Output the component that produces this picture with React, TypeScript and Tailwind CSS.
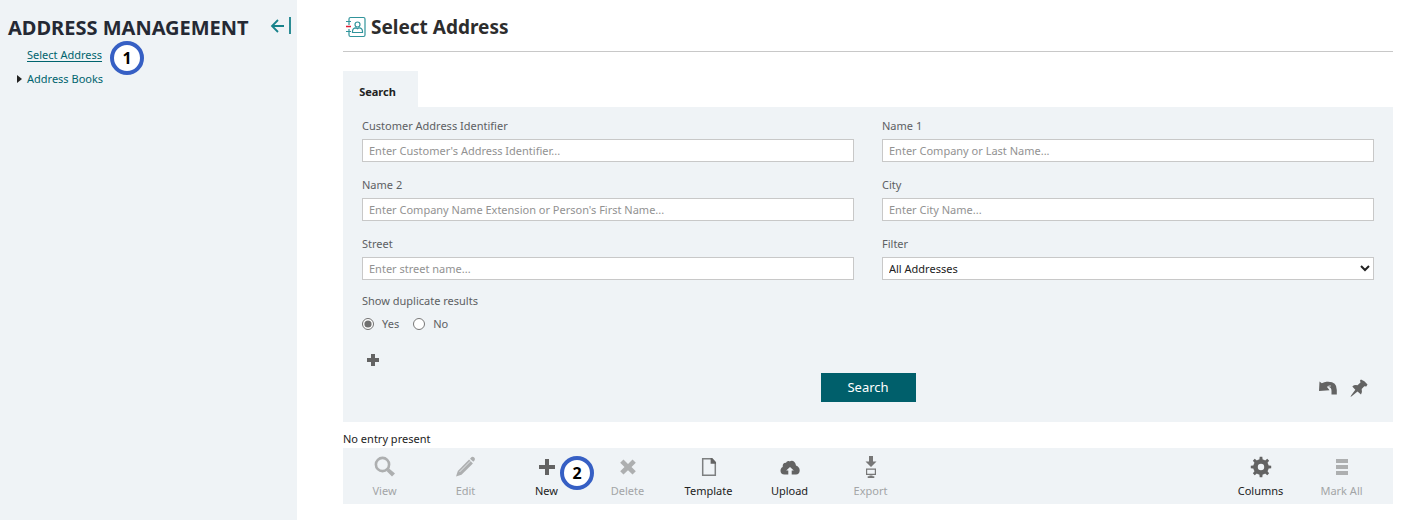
import React, { useState } from 'react';

const textFields = [
  { id: 'identifier', label: 'Customer Address Identifier', placeholder: "Enter Customer's Address Identifier..." },
  { id: 'name1', label: 'Name 1', placeholder: 'Enter Company or Last Name...' },
  { id: 'name2', label: 'Name 2', placeholder: "Enter Company Name Extension or Person's First Name..." },
  { id: 'city', label: 'City', placeholder: 'Enter City Name...' },
  { id: 'street', label: 'Street', placeholder: 'Enter street name...' },
];

function Icon({ children, size = 22 }: { children: React.ReactNode; size?: number }) {
  return (
    <svg width={size} height={size} viewBox="0 0 22 22" fill="currentColor" aria-hidden="true">
      {children}
    </svg>
  );
}

const ViewIcon = () => (
  <Icon>
    <circle cx="8.500" cy="8.500" r="6.600" fill="none" stroke="currentColor" strokeWidth="2.600" />
    <path d="M12.500 15l2.600-2.600 5.900 5-3 3.200z" />
  </Icon>
);

const EditIcon = () => (
  <Icon>
    <path d="M1 20.500l1.800-5.600L14.100 3.600l3.800 3.800L6.500 18.700z" />
    <path d="M15 2.700l1.600-1.600q1.300-.8 2.600.5t.5 2.600l-1.400 1.600z" />
    <path d="M4.500 16L15.300 5.200" stroke="#eff3f6" strokeWidth=".8" />
  </Icon>
);

const PlusIcon = () => (
  <Icon>
    <path d="M9 3h4v6h6v4h-6v6H9v-6H3V9h6z" />
  </Icon>
);

const DeleteIcon = () => (
  <Icon>
    <path d="M6.500 3.500L11 7.900l4.500-4.400 3.300 3.300-4.300 4.300 4.300 4.200-3.300 3.300-4.500-4.300-4.500 4.300-3.300-3.300 4.300-4.200-4.300-4.300z" />
  </Icon>
);

const TemplateIcon = () => (
  <Icon>
    <path d="M4.700 2.700h9l3.600 3.800v12.800H4.700z" fill="none" stroke="#7d7f80" strokeWidth="1.500" />
    <path d="M12.600 2h1.500L18 6.300v1.500h-5.400z" />
  </Icon>
);

const UploadIcon = () => (
  <Icon>
    <path d="M5.500 18.500C2.800 18.500 1.500 17 1.500 14.800c0-1.900.8-3.200 2.200-3.800C3.500 8 5 6.600 7 6.900 7.700 5.300 9.300 4.500 10.700 5.500 12.300 3.800 16.500 4.500 17 9.500c2.300.8 3.800 2.600 3.700 5.100-.1 2.500-1.500 3.900-3.700 3.900h-4.300v-4h2.100L11 10.900l-3.800 3.600h2.100v4z" />
  </Icon>
);

const ExportIcon = () => (
  <Icon>
    <path d="M9 0h4v5.400h3.500L11 11 5.500 5.400H9z" />
    <path d="M6.600 13.100h8.800v5.300H6.600z" fill="none" stroke="currentColor" strokeWidth="1.200" />
    <path d="M9.500 19.500h3v.8h1.800V22H7.700v-1.700h1.800z" />
  </Icon>
);

const ColumnsIcon = () => (
  <Icon>
    <circle cx="11" cy="11" r="5.500" fill="none" stroke="currentColor" strokeWidth="4.600" />
    {[0, 45, 90, 135].map(angle => (
      <path key={angle} d="M9.200 5l.5-4.200h2.600l.5 4.200zM9.200 17l.5 4.200h2.600l.5-4.200z" transform={`rotate(${angle} 11 11)`} />
    ))}
  </Icon>
);

const MarkAllIcon = () => (
  <Icon>
    <path d="M5 3h12v4H5zM5 9h12v4H5zM5 15h12v4H5z" />
  </Icon>
);

const leftTools = [
  { label: 'View', icon: ViewIcon, disabled: true },
  { label: 'Edit', icon: EditIcon, disabled: true },
  { label: 'New', icon: PlusIcon, disabled: false, step: 2 },
  { label: 'Delete', icon: DeleteIcon, disabled: true },
  { label: 'Template', icon: TemplateIcon, disabled: false },
  { label: 'Upload', icon: UploadIcon, disabled: false },
  { label: 'Export', icon: ExportIcon, disabled: true },
];

const rightTools = [
  { label: 'Columns', icon: ColumnsIcon, disabled: false },
  { label: 'Mark All', icon: MarkAllIcon, disabled: true },
];

function StepBadge({ step }: { step: number }) {
  return (
    <span className="flex size-[34px] items-center justify-center rounded-full border-4 border-[#365fc4] bg-white font-['Open_Sans',sans-serif] text-base font-bold text-black">
      {step}
    </span>
  );
}

function Tool({ tool }: { tool: { label: string; icon: () => React.JSX.Element; disabled: boolean; step?: number } }) {
  const ToolIcon = tool.icon;
  return (
    <div className="relative w-[81px]">
      <button
        type="button"
        disabled={tool.disabled}
        className={`flex w-full flex-col items-center gap-[5px] pt-2 leading-4 ${tool.disabled ? 'text-[#a3a5a6]' : 'text-[#222]'}`}
      >
        <span className={tool.label === 'Export' ? 'text-[#777]' : tool.disabled ? 'text-[#adafb0]' : 'text-[#636363]'}>
          <ToolIcon />
        </span>
        {tool.label}
      </button>
      {tool.step && (
        <div className="absolute top-2 left-[54px]">
          <StepBadge step={tool.step} />
        </div>
      )}
    </div>
  );
}

export default function App() {
  const [duplicates, setDuplicates] = useState('yes');

  return (
    <div className="flex min-h-screen bg-white font-['Noto_Sans',sans-serif] text-[11px] text-[#222]">

      {/* Sidebar */}
      <aside className="w-[297px] shrink-0 bg-[#eff3f6] pt-4 pl-2">
        <div className="flex items-start justify-between pr-[5px]">
          <h2 className="text-xl leading-6 font-bold whitespace-nowrap text-[#252934]">ADDRESS MANAGEMENT</h2>
          <button type="button" aria-label="Collapse menu" className="text-[#16818a]">
            <svg width="22" height="18" viewBox="0 0 22 18" fill="none" stroke="currentColor" strokeWidth="1.800">
              <path d="M14 10H2M8 4l-6 6 6 6M20 1v17" />
            </svg>
          </button>
        </div>
        <nav className="flex flex-col gap-2 pt-[7px] text-[#00646e]">
          <div className="relative flex pl-[19px] leading-4">
            <a href="#select" className="underline underline-offset-2">Select Address</a>
            <div className="absolute -top-1.5 left-[102px]">
              <StepBadge step={1} />
            </div>
          </div>
          <a href="#books" className="flex items-center pl-[9px] leading-4">
            <svg width="10" height="8" viewBox="0 0 10 8" fill="#222"><path d="M0 0l5 4-5 4z" /></svg>
            Address Books
          </a>
        </nav>
      </aside>

      {/* Main content */}
      <main className="min-w-0 flex-1 pr-[13px] pl-[46px]">
        <header className="flex items-center gap-1 border-b border-[#c8c8c8] pt-4 pb-[13px] pl-[3px]">
          <svg width="21" height="22" viewBox="0 0 21 22" fill="none" stroke="#31949b" strokeWidth="1.200" aria-hidden="true">
            <path d="M3 4V3q0-1.500 1.500-1.500h13q1.500 0 1.500 1.500v16q0 1.500-1.500 1.500h-13Q3 20.500 3 19v-1M3 7v2M3 13v2M0 5.500h5M0 15.500h5M3 4v3M3 15v3" />
            <circle cx="11.500" cy="8.500" r="2.500" />
            <path d="M6.500 16.500v-1q0-3.500 3.500-3.700l1.500 1 1.500-1q3.500.2 3.500 3.700v1z" />
            <path d="M0 10.500h5" stroke="#e01b32" strokeWidth="1.500" />
          </svg>
          <h1 className="text-[19px] leading-[22px] font-bold text-[#2d2d2d]">Select Address</h1>
        </header>

        <div className="mt-[19px] flex">
          <button type="button" className="h-9 w-[75px] bg-[#eff3f6] pt-1.5 pr-1.5 font-bold">Search</button>
        </div>

        {/* Search form */}
        <form className="bg-[#eff3f6] px-[19px] pt-[11px] pb-5 text-[#5d6063]" onSubmit={e => e.preventDefault()}>
          <div className="grid grid-cols-2 gap-x-7 gap-y-[15px]">
            {textFields.map(field => (
              <div key={field.id} className="flex flex-col gap-[5px]">
                <label htmlFor={field.id} className="leading-4">{field.label}</label>
                <input
                  id={field.id}
                  type="text"
                  placeholder={field.placeholder}
                  className="h-[23px] border border-[#c8c8c8] bg-white px-1.5 text-[#222] placeholder:text-[#929292]"
                />
              </div>
            ))}
            <div className="flex flex-col gap-[5px]">
              <label htmlFor="filter" className="leading-4">Filter</label>
              <select id="filter" className="h-[23px] border border-[#c8c8c8] bg-white px-0.5 text-[#222]">
                <option>All Addresses</option>
              </select>
            </div>
          </div>

          <fieldset className="pt-[13px]">
            <legend className="float-left w-full leading-4">Show duplicate results</legend>
            <div className="clear-both flex gap-3.5 pt-[7px] leading-4">
              <label className="flex items-center gap-2">
                <input type="radio" name="duplicates" className="size-3 accent-[#707070]" checked={duplicates === 'yes'} onChange={() => setDuplicates('yes')} />
                Yes
              </label>
              <label className="flex items-center gap-2">
                <input type="radio" name="duplicates" className="size-3 accent-[#707070]" checked={duplicates === 'no'} onChange={() => setDuplicates('no')} />
                No
              </label>
            </div>
          </fieldset>

          <button type="button" aria-label="Add criterion" className="mt-[22px] ml-[5px] block text-[#636363]">
            <svg width="12" height="12" viewBox="0 0 12 12" fill="currentColor"><path d="M4 0h4v4h4v4H8v4H4V8H0V4h4z" /></svg>
          </button>

          <div className="mt-[7px] grid grid-cols-[1fr_auto_1fr] items-center">
            <button type="submit" className="col-start-2 h-[29px] w-[95px] bg-[#005f6b] text-[13px] text-white">Search</button>
            <div className="flex justify-end gap-3 pr-1.5 text-[#636363]">
              <button type="button" aria-label="Reset">
                <svg width="20" height="18" viewBox="0 0 20 18" fill="currentColor">
                  <path d="M1.500 2.500l2.300 1.800Q8 1.500 12.500 3.500L10.500 6l-1.300 2 2.300 3.200L1 12z" />
                  <path d="M7.500 3Q18.800 1.500 18.800 11v4.500h-5.300V12q0-4.500-4-4z" />
                  <path d="M9.300 8q1.500-1.300 3.500-1" fill="none" stroke="#eff3f6" strokeWidth=".9" />
                </svg>
              </button>
              <button type="button" aria-label="Pin">
                <svg width="18" height="18" viewBox="0 0 18 18" fill="currentColor">
                  <path d="M11 .5q3.500.8 6.500 5l-1.200 2-2-.2-2.600 2.700q.8 3-.7 5.500L7.500 12.600l-5.800 4.700L.5 18l.6-1.500L5.300 10.700 2.300 7.500q2.200-2 5.200-1.200l3-2.800-.5-2z" />
                </svg>
              </button>
            </div>
          </div>
        </form>

        <p className="pt-[9px] pb-px leading-4">No entry present</p>

        {/* Table toolbar */}
        <div className="mb-4 flex h-14 justify-between bg-[#eff3f6] pr-[11px] pl-px">
          <div className="flex">
            {leftTools.map(tool => <Tool key={tool.label} tool={tool} />)}
          </div>
          <div className="flex">
            {rightTools.map(tool => <Tool key={tool.label} tool={tool} />)}
          </div>
        </div>
      </main>
    </div>
  );
}
